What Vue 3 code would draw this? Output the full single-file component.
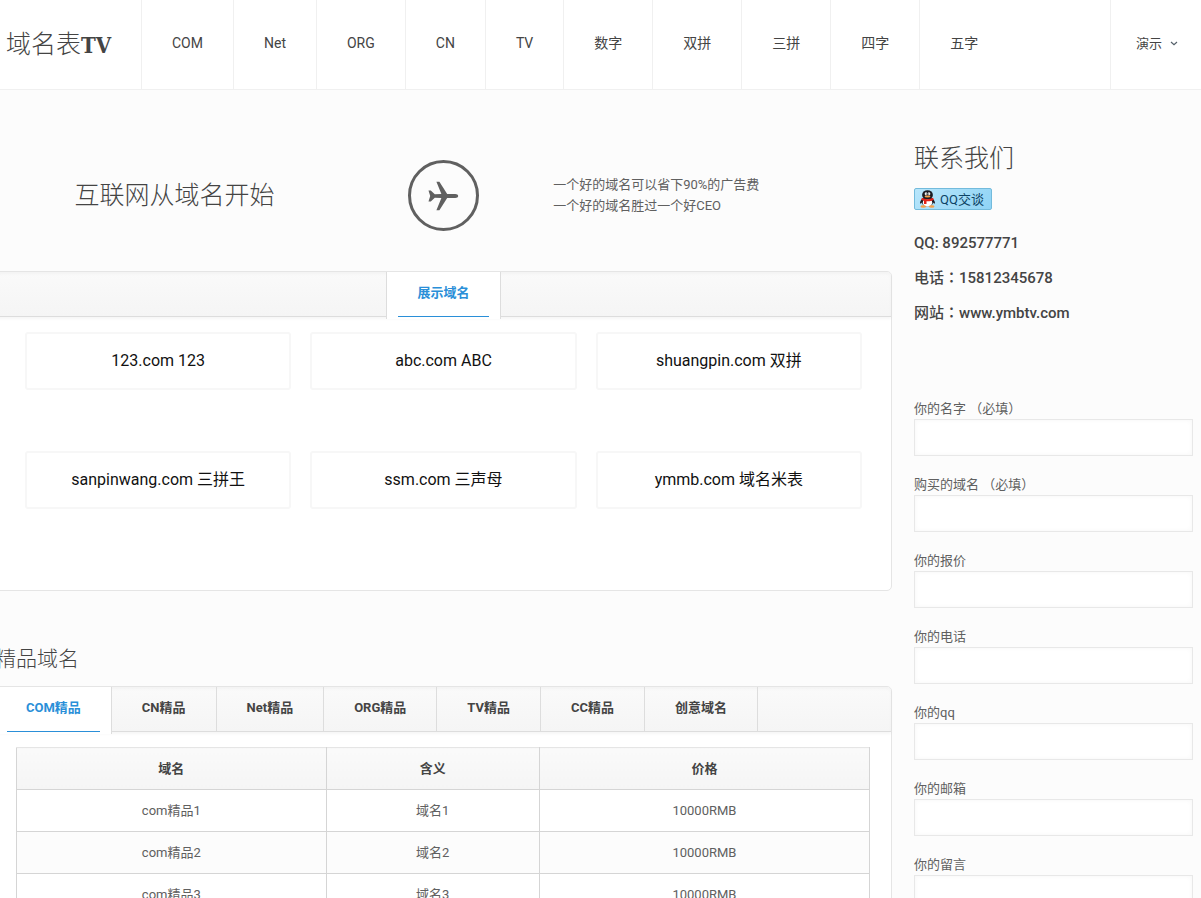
<script setup>
import { ref } from 'vue'

const navItems = ['COM', 'Net', 'ORG', 'CN', 'TV', '数字', '双拼', '三拼', '四字', '五字']

const showcase = [
  '123.com 123',
  'abc.com ABC',
  'shuangpin.com 双拼',
  'sanpinwang.com 三拼王',
  'ssm.com 三声母',
  'ymmb.com 域名米表'
]

const tabs = ['COM精品', 'CN精品', 'Net精品', 'ORG精品', 'TV精品', 'CC精品', '创意域名']
const activeTab = ref(0)

const rows = [1, 2, 3].map((n) => ({
  name: `com精品${n}`,
  meaning: `域名${n}`,
  price: '10000RMB'
}))

const fields = [
  { id: 'name', label: '你的名字 （必填）' },
  { id: 'domain', label: '购买的域名 （必填）' },
  { id: 'offer', label: '你的报价' },
  { id: 'phone', label: '你的电话' },
  { id: 'qq', label: '你的qq' },
  { id: 'email', label: '你的邮箱' }
]
</script>

<template>
  <div class="page">
    <header class="top">
      <a href="#" class="logo">域名表<strong>TV</strong></a>
      <nav class="nav">
        <a v-for="item in navItems" :key="item" href="#">{{ item }}</a>
      </nav>
      <button type="button" class="demo">
        演示
        <svg width="8" height="5" viewBox="0 0 8 5" aria-hidden="true">
          <path d="M1 1l3 2.6L7 1" fill="none" stroke="#55606a" stroke-width="1.2" />
        </svg>
      </button>
    </header>

    <div class="layout">
      <main class="main">
        <section class="hero">
          <h1>互联网从域名开始</h1>
          <div class="ring">
            <svg width="32" height="30" viewBox="0 0 32 30" aria-hidden="true">
              <path
                d="M1.500 9.500h2.300L7.800 13.200l6.600-.2L9.400.8h3L20.200 13h8c1.800 0 3 .9 3 2s-1.200 2-3 2h-8l-7.800 12.200h-3L14.400 17l-6.600-.2-4 3.700H1.500L3.200 15z"
                fill="#606060"
              />
            </svg>
          </div>
          <p>一个好的域名可以省下90%的广告费<br />一个好的域名胜过一个好CEO</p>
        </section>

        <section class="panel">
          <div class="tabbar centered">
            <button type="button" class="tab active"><span>展示域名</span></button>
          </div>
          <div class="cards">
            <a v-for="card in showcase" :key="card" href="#" class="card">{{ card }}</a>
          </div>
        </section>

        <h2 class="section-title">精品域名</h2>

        <section class="panel">
          <div class="tabbar">
            <button
              v-for="(tab, i) in tabs"
              :key="tab"
              type="button"
              class="tab"
              :class="{ active: activeTab === i }"
              @click="activeTab = i"
            >
              <span>{{ tab }}</span>
            </button>
          </div>
          <div class="table-wrap">
            <table>
              <colgroup>
                <col class="col-name" />
                <col class="col-meaning" />
                <col class="col-price" />
              </colgroup>
              <thead>
                <tr>
                  <th>域名</th>
                  <th>含义</th>
                  <th>价格</th>
                </tr>
              </thead>
              <tbody>
                <tr v-for="row in rows" :key="row.name">
                  <td>{{ row.name }}</td>
                  <td>{{ row.meaning }}</td>
                  <td>{{ row.price }}</td>
                </tr>
              </tbody>
            </table>
          </div>
        </section>
      </main>

      <aside class="side">
        <h2>联系我们</h2>
        <a href="#" class="qq">
          <svg width="17" height="18" viewBox="0 0 16 18" aria-hidden="true">
            <path d="M3.500 8C1.200 10 .2 12 .6 13.500c.8.300 1.600-.5 2.400-1.500zM12.500 8c2.300 2 3.300 4 2.900 5.500-.8.300-1.600-.5-2.400-1.500z" fill="#1b1b22" />
            <ellipse cx="8" cy="11.500" rx="5.600" ry="5.300" fill="#1b1b22" />
            <ellipse cx="8" cy="12.700" rx="4.700" ry="4" fill="#fff" />
            <ellipse cx="3.800" cy="16.500" rx="2.800" ry="1.300" fill="#f5a04a" />
            <ellipse cx="12.200" cy="16.500" rx="2.800" ry="1.300" fill="#f5a04a" />
            <ellipse cx="8" cy="4.900" rx="5.400" ry="4.700" fill="#1b1b22" />
            <ellipse cx="6.500" cy="3.800" rx="1.300" ry="1.600" fill="#fff" />
            <ellipse cx="9.500" cy="3.800" rx="1.300" ry="1.600" fill="#fff" />
            <circle cx="6.800" cy="4" r=".6" fill="#111" />
            <circle cx="9.200" cy="4" r=".6" fill="#111" />
            <ellipse cx="8" cy="6.500" rx="3" ry=".9" fill="#f5a04a" />
            <path d="M2.400 7.800c3.200 1.900 8 1.900 11.200 0l.7 1.900c-2.200 1.300-4.700 1.700-7.300 1.500v2.900H4.500v-3.300L1.700 9.700z" fill="#e2231a" />
          </svg>
          <span>QQ交谈</span>
        </a>
        <div class="contact">
          <p>QQ: 892577771</p>
          <p>电话<span class="colon">：</span>15812345678</p>
          <p>网站<span class="colon">：</span>www.ymbtv.com</p>
        </div>
        <form class="form" @submit.prevent>
          <div v-for="field in fields" :key="field.id" class="field">
            <label :for="field.id">{{ field.label }}</label>
            <input :id="field.id" type="text" />
          </div>
          <div class="field">
            <label for="message">你的留言</label>
            <textarea id="message" rows="4"></textarea>
          </div>
        </form>
      </aside>
    </div>
  </div>
</template>

<style>
html {
  background: #fcfcfc;
  overflow-x: hidden;
  scrollbar-width: none;
}
</style>

<style scoped>
.page {
  font: 13px/21px Roboto, "Noto Sans CJK SC", sans-serif;
  color: #606060;
}
.page * {
  box-sizing: border-box;
}
a {
  color: inherit;
  text-decoration: none;
}
button {
  border: 0;
  background: none;
  font: inherit;
  color: inherit;
  cursor: pointer;
}
h1,
h2,
p {
  margin: 0;
}
h1,
h2 {
  font-weight: 300;
  font-size: 25px;
  line-height: 32px;
  color: #444;
}

.top {
  display: flex;
  height: 90px;
  background: #fff;
  border-bottom: 1px solid #f0f0f0;
  color: #444;
}
.logo {
  flex: 0 0 142px;
  padding: 0 6px;
  border-right: 1px solid #f0f0f0;
  font-size: 25px;
  font-weight: 300;
  line-height: 89px;
  white-space: nowrap;
}
.logo strong {
  font-family: "DejaVu Serif Condensed", "DejaVu Serif", serif;
  font-size: 22px;
  font-weight: 700;
}
.nav {
  flex: 1;
  display: flex;
}
.nav a {
  padding: 0 30px;
  border-right: 1px solid #f0f0f0;
  font-size: 14px;
  line-height: 87px;
  white-space: nowrap;
}
.nav a:last-child {
  border-right: 0;
}
.demo {
  display: flex;
  align-items: center;
  gap: 8px;
  padding: 0 23px 3px 25px;
  border-left: 1px solid #f0f0f0;
}

.layout {
  display: grid;
  grid-template-columns: minmax(0, 1fr) 279px;
  gap: 22px;
  padding-right: 8px;
}
.main {
  margin-left: -5px;
}
.hero {
  display: grid;
  grid-template-columns: 2fr 1fr 2fr;
  align-items: center;
  padding: 70px 0 40px;
}
.hero h1 {
  text-align: center;
}
.ring {
  display: flex;
  align-items: center;
  justify-content: center;
  justify-self: center;
  width: 71px;
  height: 71px;
  border: 3px solid #606060;
  border-radius: 50%;
}
.hero p {
  padding: 0 0 2px 20px;
}

.panel {
  background: #fff;
  border: 1px solid #e5e5e5;
  border-radius: 5px;
}
.tabbar {
  display: flex;
  height: 45px;
  border-bottom: 1px solid #ddd;
  border-radius: 4px 4px 0 0;
  background: linear-gradient(#fafafa, #f5f5f5);
  box-shadow: inset 0 2px 3px rgba(0, 0, 0, 0.03), 0 2px 3px rgba(0, 0, 0, 0.04);
}
.tabbar.centered {
  justify-content: center;
}
.tab {
  display: flex;
  align-items: flex-start;
  height: 44px;
  padding: 0 30px;
  border-right: 1px solid #ddd;
  font-weight: 700;
  line-height: 41px;
  color: #444;
  white-space: nowrap;
}
.centered .tab {
  border-left: 1px solid #ddd;
}
.tab.active {
  height: 47px;
  padding: 0 11px;
  background: #fff;
  color: #2a8fd8;
}
.tab.active span {
  height: 45px;
  padding: 0 19px;
  border-bottom: 1px solid #2a8fd8;
}
.cards {
  display: grid;
  grid-template-columns: repeat(3, 1fr);
  gap: 61px 19px;
  padding: 15px 29px 81px;
}
.card {
  height: 58px;
  border: 2px solid #f7f7f7;
  border-radius: 3px;
  font-size: 16px;
  line-height: 54px;
  text-align: center;
  color: #111;
  white-space: nowrap;
}

.section-title {
  padding: 52px 0 11px;
  font-size: 21px;
}
.table-wrap {
  padding: 15px 21px 20px 20px;
}
table {
  width: 100%;
  table-layout: fixed;
  border-collapse: collapse;
  border: 1px solid #ddd;
  text-align: center;
}
.col-name {
  width: 36.3%;
}
.col-meaning {
  width: 25%;
}
th,
td {
  height: 42px;
  padding: 0;
  border: 1px solid #d5d5d5;
}
th {
  border-top-color: #e5e5e5;
  background: linear-gradient(#fafafa, #f5f5f5);
  font-weight: 700;
  color: #444;
}
tbody tr:nth-child(even) {
  background: #fcfcfc;
}

.side {
  padding-top: 53px;
}
.qq {
  display: flex;
  align-items: center;
  gap: 4px;
  width: 78px;
  height: 22px;
  margin: 13px 0 16px;
  padding: 0 4px;
  border: 1px solid #73bbdc;
  border-radius: 2px;
  background: linear-gradient(135deg, #b8e6fb, #8fd3f5);
  color: #0c4265;
  white-space: nowrap;
}
.contact {
  margin-bottom: 66px;
  font-size: 15px;
  font-weight: 500;
  line-height: 35px;
  color: #444;
}
.colon {
  font-family: "Noto Sans CJK TC", sans-serif;
  line-height: 1;
}
.field {
  margin-bottom: 17px;
}
.field label {
  display: block;
  height: 22px;
  line-height: 23px;
}
.field input,
.field textarea {
  display: block;
  width: 100%;
  height: 37px;
  padding: 8px;
  border: 1px solid #e8e8e8;
  border-radius: 0;
  background: #fff;
  box-shadow: inset 0 0 5px rgba(0, 0, 0, 0.04);
  font: inherit;
  resize: none;
}
.field textarea {
  height: 120px;
}
</style>
